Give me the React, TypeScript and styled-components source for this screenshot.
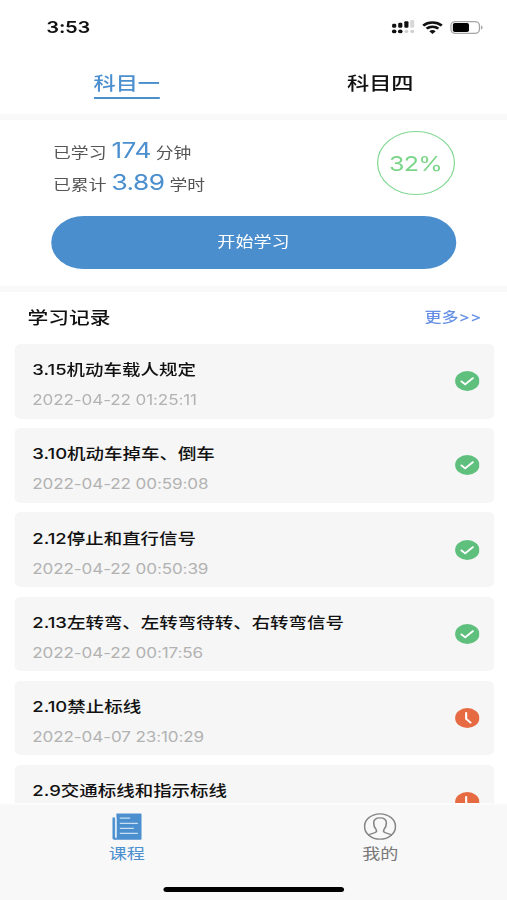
import React from "react";
import styled, { createGlobalStyle } from "styled-components";

const STRETCH = 1.22;

const GlobalStyle = createGlobalStyle`
  * { box-sizing: border-box; }
  html, body { margin: 0; padding: 0; background: #fff; overflow: hidden; }
`;

const Viewport = styled.div`
  width: 507px;
  height: 900px;
  overflow: hidden;
  background: #fff;
`;

const Screen = styled.div`
  width: calc(507px / ${STRETCH});
  height: 900px;
  transform: scaleX(${STRETCH});
  transform-origin: 0 0;
  display: flex;
  flex-direction: column;
  font-family: Inter, "Noto Sans CJK SC", sans-serif;
  color: #111;
  white-space: nowrap;
`;

const StatusBar = styled.header`
  height: 54px;
  flex: none;
  display: flex;
  justify-content: space-between;
  align-items: center;
  padding: 0 20px 0 38px;
`;

const Clock = styled.time`
  font-size: 16.5px;
  line-height: 20px;
  font-weight: 600;
  letter-spacing: -0.2px;
`;

const StatusIcons = styled.div`
  display: flex;
  align-items: center;
  gap: 6px;
  svg { display: block; }
`;

const Tabs = styled.nav`
  height: 60px;
  flex: none;
  display: grid;
  grid-template-columns: 1fr 1fr;
  justify-items: center;
  align-items: start;
  padding-top: 16px;
`;

const Tab = styled.a<{ $active?: boolean }>`
  height: 29px;
  font-size: 18.2px;
  line-height: 26px;
  font-weight: 500;
  color: ${(p) => (p.$active ? "#4b8fcf" : "#111")};
  border-bottom: 2px solid ${(p) => (p.$active ? "#4b8fcf" : "transparent")};
`;

const Divider = styled.div`
  height: 6px;
  flex: none;
  background: #f9f9f9;
`;

const Summary = styled.section`
  height: 166px;
  flex: none;
  padding: 10px 42px 0;
`;

const SummaryTop = styled.div`
  display: flex;
  justify-content: space-between;
  height: 86.4px;
`;

const Stats = styled.div`
  display: flex;
  flex-direction: column;
  padding: 4px 0 0 1.5px;
`;

const Stat = styled.p`
  margin: 0;
  height: 32px;
  line-height: 32px;
  font-size: 14.6px;
  color: #555;
`;

const Figure = styled.span`
  font-size: 21.5px;
  letter-spacing: -0.4px;
  margin: 0 4px;
  color: #4b8fcf;
`;

const Progress = styled.div`
  width: 64px;
  height: 64px;
  margin: 0.5px 1px 0 0;
  border: 1.4px solid #82d892;
  border-radius: 50%;
  display: flex;
  align-items: center;
  justify-content: center;
  padding-top: 2px;
  font-size: 20.5px;
  letter-spacing: -0.6px;
  color: #7bd68a;
`;

const StartButton = styled.button`
  display: block;
  width: 100%;
  height: 53px;
  padding: 0;
  border: 0;
  border-radius: 27px;
  background: #4a8ece;
  color: #fff;
  font: inherit;
  font-size: 14.8px;
  line-height: 53px;
`;

const History = styled.main`
  flex: 1;
  min-height: 0;
  overflow: hidden;
  padding: 0 10.5px 0 11.5px;
`;

const HistoryHead = styled.div`
  height: 52px;
  display: flex;
  justify-content: space-between;
  align-items: center;
  padding: 0 10.5px 0 11px;
`;

const Heading = styled.h2`
  margin: 0;
  font-size: 17px;
  line-height: 24px;
  font-weight: 500;
`;

const More = styled.a`
  padding-bottom: 2px;
  font-size: 14px;
  line-height: 24px;
  font-weight: 500;
  color: #6590e6;
`;

const List = styled.ul`
  list-style: none;
  margin: 0;
  padding: 0;
  display: flex;
  flex-direction: column;
  gap: 9.7px;
`;

const Item = styled.li`
  height: 74.5px;
  flex: none;
  display: flex;
  justify-content: space-between;
  align-items: center;
  padding: 0 11.6px 0 15px;
  border-radius: 5px;
  background: #f6f6f6;
  svg { display: block; }
`;

const ItemText = styled.div`
  padding-top: 7px;
`;

const ItemTitle = styled.div`
  font-size: 15.15px;
  line-height: 24px;
  font-weight: 500;
`;

const ItemTime = styled.div`
  margin-top: 7px;
  font-size: 14px;
  line-height: 22px;
  letter-spacing: -0.1px;
  color: #b2b2b2;
`;

const BottomBar = styled.footer`
  height: 97px;
  flex: none;
  border-top: 2px solid #fcfcfc;
  background: #f8f8f8;
  display: flex;
  flex-direction: column;
  align-items: center;
  justify-content: space-between;
  padding-bottom: 8px;
`;

const BottomNav = styled.nav`
  width: 100%;
  display: grid;
  grid-template-columns: 1fr 1fr;
`;

const NavItem = styled.a<{ $active?: boolean }>`
  display: flex;
  flex-direction: column;
  align-items: center;
  padding-top: 8px;
  gap: 2.5px;
  font-size: 14.8px;
  line-height: 22px;
  color: ${(p) => (p.$active ? "#4b8fcf" : "#777")};
  svg { display: block; }
`;

const HomeIndicator = styled.div`
  width: 148px;
  height: 5.5px;
  border-radius: 3px;
  background: #000;
`;

const SignalIcon = () => (
  <svg width="19" height="14" viewBox="0 0 19 14" fill="#111">
    <rect x="0.4" y="3.8" width="3.4" height="4" rx="1.2" />
    <rect x="5.4" y="2.8" width="3.4" height="5" rx="1.2" />
    <rect x="10.4" y="1.2" width="3.4" height="6.6" rx="1" />
    <rect x="15.2" y="0" width="3.4" height="7.8" rx="1" fill="#d8d8d8" />
    <circle cx="2.1" cy="11.4" r="1.9" />
    <circle cx="7.1" cy="11.4" r="1.9" />
    <circle cx="12.1" cy="11.4" r="1.6" fill="#d0d0d0" />
    <circle cx="16.9" cy="11.4" r="1.6" fill="#d0d0d0" />
  </svg>
);

const WifiIcon = () => (
  <svg width="17" height="13" viewBox="0 0 17 13" fill="none" stroke="#111" strokeWidth="2.4">
    <path d="M0.9 4.6a10.8 10.8 0 0 1 15.2 0" />
    <path d="M3.7 7.7a6.8 6.8 0 0 1 9.6 0" />
    <path d="M8.5 13 5.9 10.2a3.7 3.7 0 0 1 5.2 0Z" fill="#111" stroke="none" />
  </svg>
);

const BatteryIcon = () => (
  <svg width="27" height="13" viewBox="0 0 27 13" fill="none">
    <rect x="0.6" y="0.6" width="23.4" height="11.8" rx="3.8" stroke="#a5a5a5" strokeWidth="1.1" />
    <rect x="2.2" y="2.1" width="13.2" height="8.8" rx="1.6" fill="#000" />
    <path d="M25.3 4.5c1.7.5 1.7 3.5 0 4Z" fill="#a5a5a5" />
  </svg>
);

const DoneIcon = () => (
  <svg width="20" height="20" viewBox="0 0 20 20">
    <circle cx="10" cy="10" r="10" fill="#5fbf7d" />
    <path d="m5.2 10.3 3.1 3.1 6.3-6.3" fill="none" stroke="#fff" strokeWidth="1.7" strokeLinecap="round" />
  </svg>
);

const PendingIcon = () => (
  <svg width="20" height="20" viewBox="0 0 20 20">
    <circle cx="10" cy="10" r="10" fill="#e66b42" />
    <path d="M9.1 4.9v5.9l3.6 3.8" fill="none" stroke="#fff" strokeWidth="1.7" strokeLinecap="round" />
  </svg>
);

const CourseIcon = () => (
  <svg width="26" height="27" viewBox="0 0 26 27">
    <path d="M1.2 4.5h2v19.4c0 .5.4.9.9.9v1.9H2.6c-.9 0-1.4-.5-1.4-1.4Z" fill="#4b8fcf" />
    <path d="M4.4.6h20q.6 0 .6.6v24.9q0 .6-.6.6H3.2q1.2-.7 1.2-2Z" fill="#4b8fcf" />
    <path d="M4.2 4.5v19.8" stroke="#c8e0f3" strokeWidth="1.3" />
    <path d="M7.2 5.2h8.5M7.2 10.4H22M7.2 15.3h11.5M7.2 20.3H22" stroke="#c8e0f3" strokeWidth="1.3" />
  </svg>
);

const ProfileIcon = () => (
  <svg width="27" height="27" viewBox="0 0 27 27" fill="none" stroke="#858585" strokeWidth="1.3">
    <circle cx="13.5" cy="13.5" r="12.7" />
    <path d="M4 22.2c1.5-1.7 4.6-1.9 6-3 1-.8.7-1.9.1-3-1.3-1.9-1.8-3.8-1.8-6.200 0-3.200 2-5.200 5.200-5.200s5.200 2 5.200 5.200c0 2.400-.5 4.300-1.800 6.200-.6 1.100-.9 2.200.1 3 1.400 1.100 4.500 1.300 6 3" />
  </svg>
);

const records = [
  { title: "3.15机动车载人规定", time: "2022-04-22 01:25:11", done: true },
  { title: "3.10机动车掉车、倒车", time: "2022-04-22 00:59:08", done: true },
  { title: "2.12停止和直行信号", time: "2022-04-22 00:50:39", done: true },
  { title: "2.13左转弯、左转弯待转、右转弯信号", time: "2022-04-22 00:17:56", done: true },
  { title: "2.10禁止标线", time: "2022-04-07 23:10:29", done: false },
  { title: "2.9交通标线和指示标线", time: "", done: false },
];

export default function App() {
  return (
    <Viewport>
      <GlobalStyle />
      <Screen>
        <StatusBar>
          <Clock>3:53</Clock>
          <StatusIcons>
            <SignalIcon />
            <WifiIcon />
            <BatteryIcon />
          </StatusIcons>
        </StatusBar>
        <Tabs>
          <Tab $active>科目一</Tab>
          <Tab>科目四</Tab>
        </Tabs>
        <Divider />
        <Summary>
          <SummaryTop>
            <Stats>
              <Stat>已学习<Figure>174</Figure>分钟</Stat>
              <Stat>已累计<Figure>3.89</Figure>学时</Stat>
            </Stats>
            <Progress>32%</Progress>
          </SummaryTop>
          <StartButton>开始学习</StartButton>
        </Summary>
        <Divider />
        <History>
          <HistoryHead>
            <Heading>学习记录</Heading>
            <More>更多&gt;&gt;</More>
          </HistoryHead>
          <List>
            {records.map((r) => (
              <Item key={r.title}>
                <ItemText>
                  <ItemTitle>{r.title}</ItemTitle>
                  <ItemTime>{r.time || "\u00a0"}</ItemTime>
                </ItemText>
                {r.done ? <DoneIcon /> : <PendingIcon />}
              </Item>
            ))}
          </List>
        </History>
        <BottomBar>
          <BottomNav>
            <NavItem $active>
              <CourseIcon />
              课程
            </NavItem>
            <NavItem>
              <ProfileIcon />
              我的
            </NavItem>
          </BottomNav>
          <HomeIndicator />
        </BottomBar>
      </Screen>
    </Viewport>
  );
}
